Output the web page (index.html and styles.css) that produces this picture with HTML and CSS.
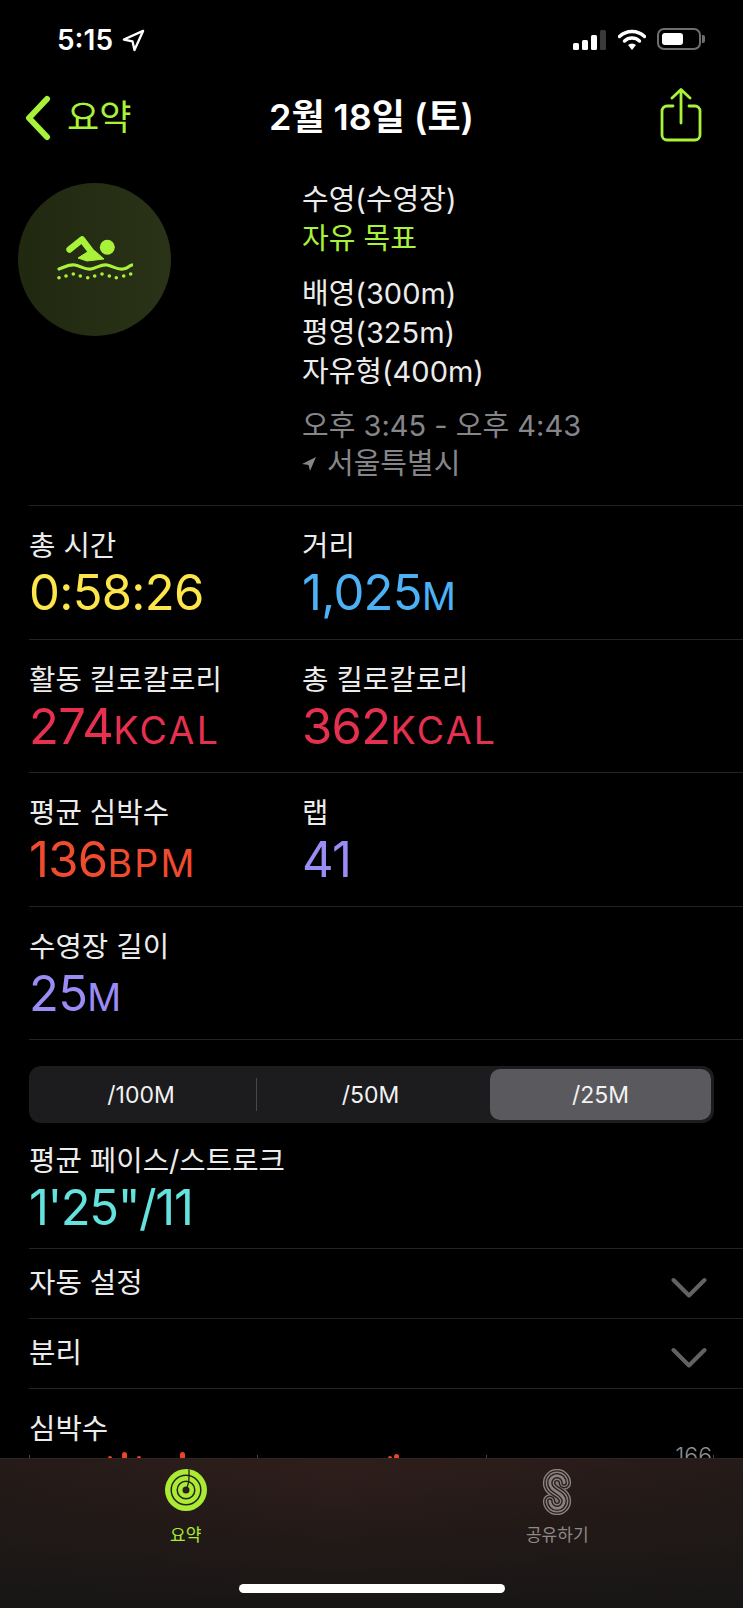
FILE: index.html
```html
<!DOCTYPE html>
<html lang="ko">
<head>
    <meta charset="UTF-8">
    <meta name="viewport" content="width=device-width, initial-scale=1.0">
    <title>2월 18일 (토)</title>
    <link rel="stylesheet" href="styles.css">
</head>
<body>
<div class="page">

    <!-- Status bar -->
    <div class="status-bar">
        <div class="status-time">
            <span>5:15</span>
            <svg class="status-arrow" viewBox="0 0 24 24"><path d="M22 2 L2 11 L11 13 L13 22 Z" fill="none" stroke="#fff" stroke-width="2.4" stroke-linejoin="round"/></svg>
        </div>
        <div class="status-icons">
            <div class="signal">
                <i class="bar bar-1"></i><i class="bar bar-2"></i><i class="bar bar-3"></i><i class="bar bar-4"></i>
            </div>
            <svg class="wifi" viewBox="0 0 28 21">
                <path d="M1.5 7.5 A18 18 0 0 1 26.5 7.5" fill="none" stroke="#fff" stroke-width="3.4" stroke-linecap="round"/>
                <path d="M6.5 12 A11 11 0 0 1 21.5 12" fill="none" stroke="#fff" stroke-width="3.4" stroke-linecap="round"/>
                <path d="M10 16 L14 21 L18 16 A6 6 0 0 0 10 16 Z" fill="#fff"/>
            </svg>
            <div class="battery"><div class="battery-fill"></div></div>
            <div class="battery-nub"></div>
        </div>
    </div>

    <!-- Navigation -->
    <div class="nav">
        <div class="nav-back">
            <svg class="chevron-left" viewBox="0 0 26 46"><path d="M22 4 L4 23 L22 42" fill="none" stroke="#a9f23a" stroke-width="6" stroke-linecap="round" stroke-linejoin="round"/></svg>
            <span>요약</span>
        </div>
        <div class="nav-title">2월 18일 (토)</div>
        <svg class="share" viewBox="0 0 42 54">
            <path d="M13 18 H7 A5 5 0 0 0 2 23 V47 A5 5 0 0 0 7 52 H35 A5 5 0 0 0 40 47 V23 A5 5 0 0 0 35 18 H29" fill="none" stroke="#a9f23a" stroke-width="2.8" stroke-linecap="round"/>
            <path d="M21 35 V2 M12 10 L21 1.5 L30 10" fill="none" stroke="#a9f23a" stroke-width="2.8" stroke-linecap="round" stroke-linejoin="round"/>
        </svg>
    </div>

    <!-- Workout header -->
    <div class="workout">
        <div class="workout-badge">
            <svg class="swim" viewBox="0 0 76 44">
                <circle cx="50.3" cy="11.3" r="7.5" fill="#a9f23a"/>
                <path d="M12.5 13.5 L25 3.5 L36 18" fill="none" stroke="#a9f23a" stroke-width="6.5" stroke-linecap="round" stroke-linejoin="round"/>
                <path d="M21 22 L32 15 L38 15 L47 23 L30 25 Z" fill="#a9f23a" stroke="#a9f23a" stroke-width="1" stroke-linejoin="round"/>
                <path d="M2 33 C8 31 12 28 18 29 S28 34 34 33 S44 28 50 29 S60 34 66 33 S71 30 75 29" fill="none" stroke="#a9f23a" stroke-width="3.2" stroke-linecap="round"/>
                <g fill="#a9f23a">
                    <circle cx="2" cy="41.7" r="1.8"/><circle cx="9" cy="40" r="1.8"/><circle cx="16.3" cy="38" r="1.8"/>
                    <circle cx="23.3" cy="40" r="1.8"/><circle cx="30.7" cy="41.7" r="1.8"/><circle cx="37.7" cy="40" r="1.8"/>
                    <circle cx="45" cy="38" r="1.8"/><circle cx="52.3" cy="40" r="1.8"/><circle cx="59.3" cy="41.7" r="1.8"/>
                    <circle cx="66.7" cy="40" r="1.8"/><circle cx="73.7" cy="38" r="1.8"/>
                </g>
            </svg>
        </div>
        <div class="workout-info">
            <div class="info-group">
                <div>수영(수영장)</div>
                <div class="lime">자유 목표</div>
            </div>
            <div class="info-group">
                <div>배영(300m)</div>
                <div>평영(325m)</div>
                <div>자유형(400m)</div>
            </div>
            <div class="info-group muted">
                <div>오후 3:45 - 오후 4:43</div>
                <div class="place">
                    <svg class="place-arrow" viewBox="0 0 14 14"><path d="M14 0 L0 7 L6.5 8 L8 14 Z" fill="#86868a"/></svg>
                    <span>서울특별시</span>
                </div>
            </div>
        </div>
    </div>

    <!-- Metrics -->
    <div class="row">
        <div class="metric">
            <div class="label">총 시간</div>
            <div class="value yellow">0:58:26</div>
        </div>
        <div class="metric">
            <div class="label">거리</div>
            <div class="value blue">1,025<span class="unit">M</span></div>
        </div>
    </div>
    <div class="row">
        <div class="metric">
            <div class="label">활동 킬로칼로리</div>
            <div class="value red">274<span class="unit">KCAL</span></div>
        </div>
        <div class="metric">
            <div class="label">총 킬로칼로리</div>
            <div class="value red">362<span class="unit">KCAL</span></div>
        </div>
    </div>
    <div class="row">
        <div class="metric">
            <div class="label">평균 심박수</div>
            <div class="value orange">136<span class="unit">BPM</span></div>
        </div>
        <div class="metric">
            <div class="label">랩</div>
            <div class="value purple">41</div>
        </div>
    </div>
    <div class="row">
        <div class="metric">
            <div class="label">수영장 길이</div>
            <div class="value purple">25<span class="unit">M</span></div>
        </div>
    </div>

    <!-- Pace -->
    <div class="pace">
        <div class="segments">
            <div class="segment seg-100">/100M</div>
            <div class="segment-line"></div>
            <div class="segment seg-50">/50M</div>
            <div class="segment seg-25">/25M</div>
        </div>
        <div class="label">평균 페이스/스트로크</div>
        <div class="value cyan">1'25"/11</div>
    </div>

    <!-- Collapsed rows -->
    <div class="fold">
        <span>자동 설정</span>
        <svg class="chevron-down" viewBox="0 0 36 22"><path d="M2.5 3 L18 18.5 L33.5 3" fill="none" stroke="#636366" stroke-width="4" stroke-linecap="round" stroke-linejoin="round"/></svg>
    </div>
    <div class="fold">
        <span>분리</span>
        <svg class="chevron-down" viewBox="0 0 36 22"><path d="M2.5 3 L18 18.5 L33.5 3" fill="none" stroke="#636366" stroke-width="4" stroke-linecap="round" stroke-linejoin="round"/></svg>
    </div>

    <!-- Heart rate -->
    <div class="heart">
        <div class="label">심박수</div>
        <svg class="heart-chart" viewBox="0 0 743 20">
            <g fill="#48484a">
                <rect x="29" y="8" width="1" height="5"/>
                <rect x="257" y="8" width="1" height="5"/>
                <rect x="486" y="8" width="1" height="5"/>
                <rect x="713" y="8" width="1" height="5"/>
            </g>
            <g fill="#ee4426">
                <rect x="108" y="9" width="4" height="8" rx="2"/>
                <rect x="122" y="5" width="5" height="12" rx="2.5"/>
                <rect x="137" y="9" width="4" height="8" rx="2"/>
                <rect x="180" y="5" width="5" height="12" rx="2.5"/>
                <rect x="388" y="9" width="4" height="8" rx="2"/>
                <rect x="394" y="7" width="5" height="12" rx="2.5"/>
            </g>
            <text class="chart-max" x="712" y="17" text-anchor="end">166</text>
        </svg>
    </div>

    <!-- Tab bar -->
    <div class="tabbar">
        <div class="tabs">
            <div class="tab tab-active">
                <svg class="rings" viewBox="0 0 42 42">
                    <circle cx="21" cy="21" r="21" fill="#a9ec33"/>
                    <circle cx="21" cy="21" r="14.8" fill="none" stroke="#2a1d1b" stroke-width="1.5"/>
                    <circle cx="21" cy="21" r="8.8" fill="none" stroke="#2a1d1b" stroke-width="1.5"/>
                    <circle cx="21" cy="21" r="3.5" fill="#2a1d1b"/>
                    <path d="M24 0.5 V8 Q24 15 21.5 19" fill="none" stroke="#2a1d1b" stroke-width="1.3"/>
                </svg>
                <span>요약</span>
            </div>
            <div class="tab">
                <svg class="sharing" viewBox="0 0 30 48">
                    <path class="s-1" d="M22.5 14.5 A7.5 7.5 0 0 0 7.5 14.5 C7.5 24 22.5 24 22.5 33.5 A7.5 7.5 0 0 1 7.5 33.5"/>
                    <path class="s-2" d="M22.5 14.5 A7.5 7.5 0 0 0 7.5 14.5 C7.5 24 22.5 24 22.5 33.5 A7.5 7.5 0 0 1 7.5 33.5"/>
                    <path class="s-3" d="M22.5 14.5 A7.5 7.5 0 0 0 7.5 14.5 C7.5 24 22.5 24 22.5 33.5 A7.5 7.5 0 0 1 7.5 33.5"/>
                    <path class="s-4" d="M22.5 14.5 A7.5 7.5 0 0 0 7.5 14.5 C7.5 24 22.5 24 22.5 33.5 A7.5 7.5 0 0 1 7.5 33.5"/>
                    <path class="s-5" d="M22.5 14.5 A7.5 7.5 0 0 0 7.5 14.5 C7.5 24 22.5 24 22.5 33.5 A7.5 7.5 0 0 1 7.5 33.5"/>
                </svg>
                <span>공유하기</span>
            </div>
        </div>
        <div class="home-bar"></div>
    </div>

</div>
</body>
</html>
```

FILE: styles.css
```css
* {
    box-sizing: border-box;
}
body {
    margin: 0;
    background: #000;
    color: #ececec;
    font-family: Inter, "Noto Sans CJK KR", sans-serif;
}
.page {
    position: relative;
    width: 743px;
    height: 1608px;
    overflow: hidden;
    background: #000;
}

/* status bar */
.status-bar {
    height: 77px;
    padding: 28px 38px 0 57px;
    display: flex;
    justify-content: space-between;
    align-items: flex-start;
}
.status-time {
    display: flex;
    align-items: center;
    gap: 9px;
    height: 24px;
    color: #fff;
    font-size: 28px;
    font-weight: 600;
}
.status-arrow {
    width: 23px;
    height: 23px;
}
.status-icons {
    display: flex;
    align-items: center;
    height: 22px;
}
.signal {
    display: flex;
    align-items: flex-end;
    gap: 3px;
    height: 20px;
    margin-top: 1px;
}
.bar {
    width: 6px;
    background: #fff;
    border-radius: 1.5px;
}
.bar-1 { height: 7px; }
.bar-2 { height: 10px; }
.bar-3 { height: 15px; }
.bar-4 { height: 20px; background: #3a3a3c; }
.wifi {
    width: 28px;
    height: 21px;
    margin-left: 12px;
}
.battery {
    width: 44px;
    height: 22px;
    margin-left: 11px;
    padding: 3px;
    border: 2px solid #6e6e70;
    border-radius: 7px;
}
.battery-fill {
    width: 21px;
    height: 100%;
    background: #fff;
    border-radius: 3px;
}
.battery-nub {
    width: 3px;
    height: 8px;
    margin-left: 1px;
    background: #6e6e70;
    border-radius: 0 2px 2px 0;
}

/* nav */
.nav {
    height: 81px;
    padding: 0 25px;
    display: grid;
    grid-template-columns: 1fr auto 1fr;
    align-items: center;
}
.nav-back {
    display: flex;
    align-items: center;
    gap: 16px;
    color: #a9f23a;
    font-size: 35px;
}
.nav-back span {
    margin-top: -6px;
}
.chevron-left {
    width: 26px;
    height: 46px;
}
.nav-title {
    color: #fff;
    font-size: 36px;
    font-weight: 600;
    margin-top: -7px;
}
.share {
    width: 42px;
    height: 54px;
    justify-self: end;
    margin-right: 16px;
    margin-top: -6px;
}

/* workout header */
.workout {
    height: 347px;
    padding-top: 25px;
    padding-left: 18px;
    display: flex;
}
.workout-badge {
    width: 153px;
    height: 153px;
    flex-shrink: 0;
    border-radius: 50%;
    background: linear-gradient(90deg, #20280f, #2a3218);
    display: flex;
    align-items: center;
    justify-content: center;
}
.swim {
    width: 76px;
    height: 44px;
    margin-top: -3px;
}
.workout-info {
    margin-left: 131px;
    margin-top: -3px;
    font-size: 29px;
    line-height: 39px;
}
.info-group {
    margin-bottom: 16px;
}
.info-group + .muted {
    margin-top: 14px;
}
.lime {
    color: #a9f23a;
}
.muted {
    color: #86868a;
    line-height: 38px;
}
.place {
    display: flex;
    align-items: center;
    gap: 11px;
}
.place-arrow {
    width: 14px;
    height: 14px;
}

/* metrics */
.row {
    height: 133.5px;
    margin-left: 29px;
    padding-top: 22px;
    border-top: 1px solid #232323;
    display: grid;
    grid-template-columns: 273px 1fr;
}
.label {
    font-size: 28.7px;
    line-height: 35px;
    color: #ececec;
}
.value {
    font-size: 49px;
    font-weight: 380;
    line-height: 60px;
    letter-spacing: -0.7px;
}
.unit {
    font-size: 37.5px;
    font-weight: 430;
    letter-spacing: 2.3px;
}
.yellow { color: #fde64b; }
.blue { color: #4db1f5; }
.red { color: #e6304f; }
.orange { color: #f04b2f; }
.purple { color: #9a8cf5; }
.cyan {
    color: #64e2dd;
    letter-spacing: -1.4px;
}

/* pace */
.pace {
    height: 209px;
    margin-left: 29px;
    padding-top: 26px;
    border-top: 1px solid #232323;
}
.segments {
    width: 685px;
    height: 57px;
    padding: 3px;
    margin-bottom: 20px;
    border-radius: 12px;
    background: #1c1c1e;
    display: flex;
    align-items: center;
}
.segment {
    height: 51px;
    border-radius: 10px;
    color: #f2f2f2;
    font-size: 23px;
    display: flex;
    align-items: center;
    justify-content: center;
}
.seg-100 { width: 218px; }
.seg-50 { width: 227px; }
.seg-25 {
    width: 221px;
    margin-left: 6px;
    background: #5a5a5e;
}
.segment-line {
    width: 1px;
    height: 33px;
    margin-left: 6px;
    background: #48484a;
}

/* collapsed rows */
.fold {
    height: 70px;
    margin-left: 29px;
    padding-right: 36px;
    border-top: 1px solid #232323;
    font-size: 28.7px;
    display: flex;
    align-items: center;
    justify-content: space-between;
}
.fold span {
    margin-top: -6px;
}
.chevron-down {
    width: 36px;
    height: 22px;
    margin-top: 8px;
}

/* heart rate */
.heart {
    border-top: 1px solid #232323;
    margin-left: 29px;
    padding-top: 22px;
}
.heart-chart {
    display: block;
    width: 743px;
    height: 20px;
    margin-top: 1px;
    margin-left: -29px;
}
.chart-max {
    font-size: 23px;
    font-weight: 300;
    fill: #8e8e93;
}

/* tab bar */
.tabbar {
    position: absolute;
    left: 0;
    right: 0;
    bottom: 0;
    height: 150px;
    border-top: 1px solid #2e2422;
    background:
        linear-gradient(90deg, rgba(23, 22, 21, 0.4), rgba(23, 22, 21, 0) 45%, rgba(23, 22, 21, 0.4)),
        linear-gradient(#2f1e1b, #241a18 50%, #171615);
}
.tabs {
    display: flex;
    padding-top: 10px;
}
.tab {
    width: 372px;
    height: 77px;
    color: #8f8a87;
    font-size: 17px;
    display: flex;
    flex-direction: column;
    align-items: center;
    justify-content: flex-end;
    gap: 6px;
}
.tab-active {
    color: #a9ec33;
}
.rings {
    width: 42px;
    height: 42px;
    margin-bottom: 4px;
}
.sharing {
    width: 30px;
    height: 48px;
}
.sharing path {
    fill: none;
    stroke-linecap: round;
}
.s-1 { stroke: #8a827e; stroke-width: 14.5; }
.s-2 { stroke: #2a1d1b; stroke-width: 11.6; }
.s-3 { stroke: #8a827e; stroke-width: 8.7; }
.s-4 { stroke: #2a1d1b; stroke-width: 5.8; }
.s-5 { stroke: #8a827e; stroke-width: 2.9; }
.home-bar {
    width: 266px;
    height: 9px;
    margin: 38px auto 0;
    border-radius: 5px;
    background: #fff;
}
```
